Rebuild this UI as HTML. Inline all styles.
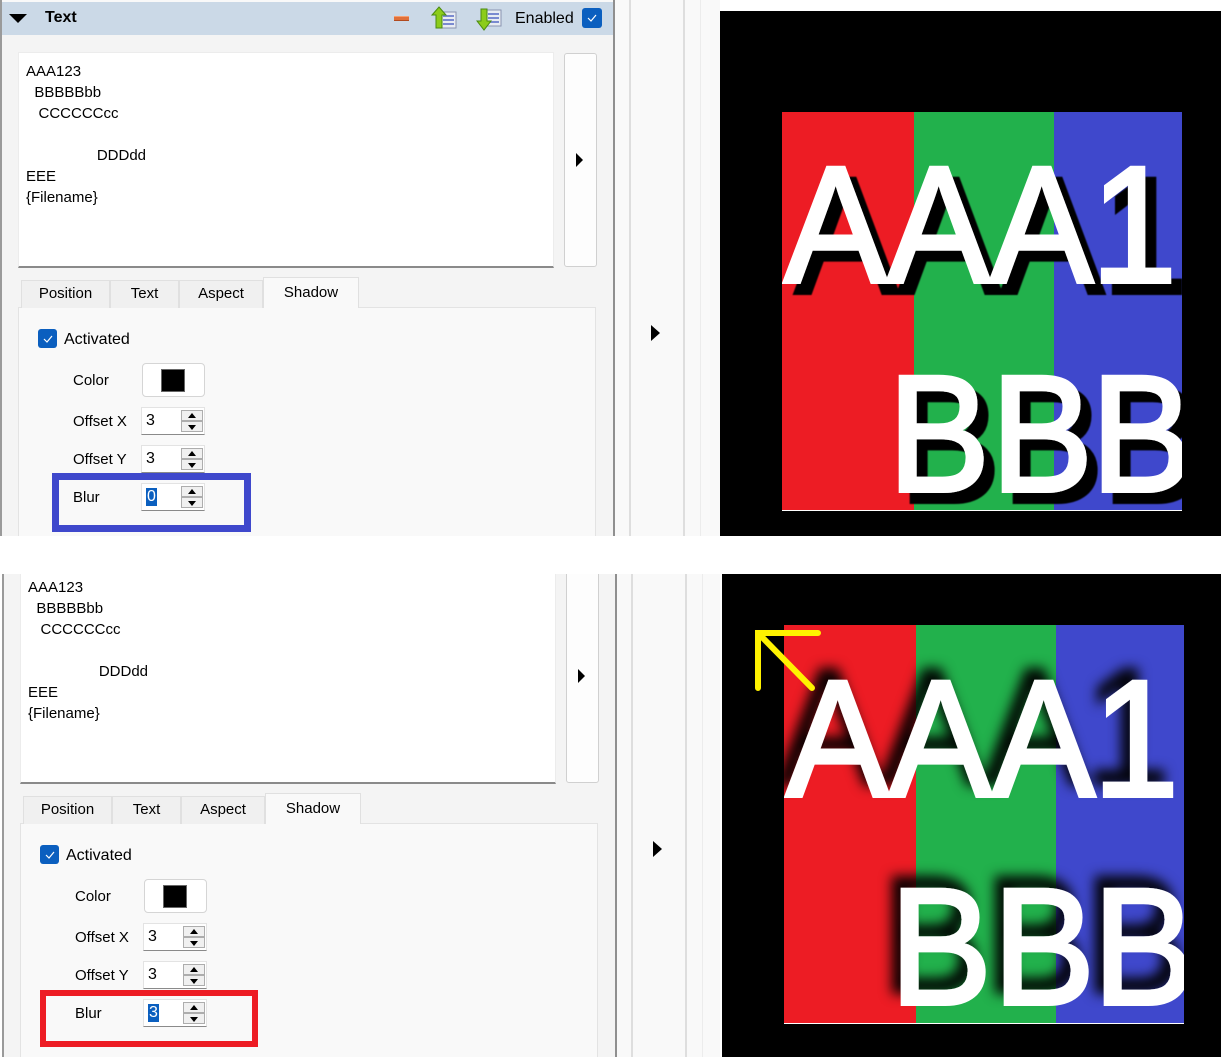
<!DOCTYPE html>
<html><head><meta charset="utf-8"><style>
*{margin:0;padding:0;box-sizing:border-box}
body{width:1221px;height:1057px;background:#fff;position:relative;overflow:hidden;font-family:"Liberation Sans",sans-serif;font-size:15px;color:#000}
.a{position:absolute}
.panel{position:absolute;left:0;top:0;width:720px;height:536px;background:#f9f9f9;overflow:hidden}
.lab{position:absolute;line-height:18px}
.spin{position:absolute;width:64px;height:28px;background:#fff;border:1px solid #e3e3e3;border-bottom:1px solid #8a8a8a}
.spin .v{position:absolute;left:4px;top:4px;line-height:18px;font-size:16px}
.spin .b{position:absolute;left:39px;width:22px;height:11px;background:#f0f0f0;border:1px solid #adadad}
.tri-u{position:absolute;left:6px;top:2px;width:0;height:0;border-left:4px solid transparent;border-right:4px solid transparent;border-bottom:5px solid #000}
.tri-d{position:absolute;left:6px;top:3px;width:0;height:0;border-left:4px solid transparent;border-right:4px solid transparent;border-top:5px solid #000}
.tab{position:absolute;top:280px;height:28px;background:#f0f0f0;border:1px solid #e0e0e0;border-bottom:none;line-height:26px;text-align:center}
.chk{position:absolute;background:#0b5fbf;border-radius:3px}
</style></head><body>

<div class="panel">
  <div class="a" style="left:0;top:0;width:2px;height:536px;background:#9a9a9a"></div>
  <div class="a" style="left:2px;top:2px;width:612px;height:534px;background:#f4f4f4"></div>
  <div class="a" style="left:613px;top:0;width:2px;height:536px;background:#8f8f8f"></div>
  <div class="a" style="left:629px;top:0;width:2px;height:536px;background:#dedede"></div>
  <div class="a" style="left:683px;top:0;width:2px;height:536px;background:#dedede"></div>
  <div class="a" style="left:700px;top:0;width:1px;height:536px;background:#ececec"></div>
  <div class="a" style="left:651px;top:325px;width:0;height:0;border-top:8px solid transparent;border-bottom:8px solid transparent;border-left:9px solid #000"></div>
  <div class="a" style="left:2px;top:2px;width:611px;height:33px;background:#cbd9e7"></div>
  <div class="a" style="left:9px;top:14px;width:0;height:0;border-left:9px solid transparent;border-right:9px solid transparent;border-top:9px solid #000"></div>
  <div class="lab" style="left:45px;top:9px;font-weight:bold;font-size:16px">Text</div>
  <div class="a" style="left:394px;top:16px;width:15px;height:5px;background:#e0703a;border-top:1px solid #f7a070;border-bottom:1px solid #b04a20"></div>
  <svg class="a" style="left:431px;top:6px" width="26" height="24" viewBox="0 0 26 24">
    <rect x="10" y="6" width="15" height="16" fill="#e8ecf2" stroke="#8a94b0"/>
    <rect x="12" y="9" width="11" height="2" fill="#7a8ad0"/><rect x="12" y="13" width="11" height="2" fill="#7a8ad0"/><rect x="12" y="17" width="11" height="2" fill="#7a8ad0"/>
    <path d="M8 1 L15 9 H11 V22 H5 V9 H1 Z" fill="#8ccc1a" stroke="#4a8a10"/>
  </svg>
  <svg class="a" style="left:476px;top:8px" width="26" height="24" viewBox="0 0 26 24">
    <rect x="10" y="2" width="15" height="16" fill="#e8ecf2" stroke="#8a94b0"/>
    <rect x="12" y="5" width="11" height="2" fill="#7a8ad0"/><rect x="12" y="9" width="11" height="2" fill="#7a8ad0"/><rect x="12" y="13" width="11" height="2" fill="#7a8ad0"/>
    <path d="M5 1 H11 V13 H15 L8 22 L1 13 H5 Z" fill="#8ccc1a" stroke="#4a8a10"/>
  </svg>
  <div class="lab" style="left:515px;top:10px;font-size:16px">Enabled</div>
  <div class="chk" style="left:582px;top:8px;width:20px;height:20px"></div>
  <svg class="a" style="left:586px;top:13px" width="12" height="10"><path d="M2 5 L5 8 L10 2" stroke="#fff" stroke-width="1.2" fill="none"/></svg>
  <div class="a" style="left:18px;top:52px;width:536px;height:216px;background:#fff;border:1px solid #ececec;border-bottom:2px solid #8a8a8a"></div>
  <div class="a" style="left:26px;top:61px;line-height:21px;font-size:15px;white-space:pre">AAA123
  BBBBBbb
   CCCCCCcc

                 DDDdd
EEE
{Filename}</div>
  <div class="a" style="left:564px;top:53px;width:33px;height:214px;background:#fdfdfd;border:1px solid #d0d0d0;border-radius:3px"></div>
  <div class="a" style="left:576px;top:153px;width:0;height:0;border-top:7px solid transparent;border-bottom:7px solid transparent;border-left:7px solid #000"></div>
  <div class="a" style="left:18px;top:307px;width:578px;height:240px;background:#f9f9f9;border:1px solid #e3e3e3"></div>
  <div class="tab" style="left:21px;width:89px">Position</div>
  <div class="tab" style="left:110px;width:69px">Text</div>
  <div class="tab" style="left:179px;width:84px">Aspect</div>
  <div class="tab" style="left:263px;top:277px;width:96px;height:31px;background:#f9f9f9;line-height:30px">Shadow</div>
  <div class="chk" style="left:38px;top:329px;width:19px;height:19px"></div>
  <svg class="a" style="left:42px;top:334px" width="12" height="10"><path d="M2 5 L5 8 L10 2" stroke="#fff" stroke-width="1.2" fill="none"/></svg>
  <div class="lab" style="left:64px;top:331px;font-size:16px">Activated</div>
  <div class="lab" style="left:73px;top:372px">Color</div>
  <div class="a" style="left:142px;top:363px;width:63px;height:34px;background:#fff;border:1px solid #d5d5d5;border-radius:4px"></div>
  <div class="a" style="left:161px;top:369px;width:24px;height:23px;background:#000;border:1px solid #666"></div>
  <div class="lab" style="left:73px;top:413px">Offset X</div>
  <div class="spin" style="left:141px;top:407px"><span class="v">3</span><div class="b" style="top:2px"><div class="tri-u"></div></div><div class="b" style="top:13px"><div class="tri-d"></div></div></div>
  <div class="lab" style="left:73px;top:451px">Offset Y</div>
  <div class="spin" style="left:141px;top:445px"><span class="v">3</span><div class="b" style="top:2px"><div class="tri-u"></div></div><div class="b" style="top:13px"><div class="tri-d"></div></div></div>
  <div class="lab" style="left:73px;top:489px">Blur</div>
  <div class="spin" style="left:141px;top:483px"><span class="v" style="background:#0b5fbf;color:#fff;padding:0 1px">0</span><div class="b" style="top:2px"><div class="tri-u"></div></div><div class="b" style="top:13px"><div class="tri-d"></div></div></div>
  <div class="a" style="left:52px;top:473px;width:199px;height:59px;border:7px solid #3f48cc"></div>
</div>

<div class="a" style="left:2px;top:574px;width:718px;height:483px;overflow:hidden">
 <div class="panel" style="top:-58px;height:541px">
  <div class="a" style="left:0;top:0;width:2px;height:541px;background:#9a9a9a"></div>
  <div class="a" style="left:2px;top:2px;width:612px;height:539px;background:#f4f4f4"></div>
  <div class="a" style="left:613px;top:0;width:2px;height:541px;background:#8f8f8f"></div>
  <div class="a" style="left:629px;top:0;width:2px;height:541px;background:#dedede"></div>
  <div class="a" style="left:683px;top:0;width:2px;height:541px;background:#dedede"></div>
  <div class="a" style="left:700px;top:0;width:1px;height:541px;background:#ececec"></div>
  <div class="a" style="left:651px;top:325px;width:0;height:0;border-top:8px solid transparent;border-bottom:8px solid transparent;border-left:9px solid #000"></div>
  <div class="a" style="left:18px;top:52px;width:536px;height:216px;background:#fff;border:1px solid #ececec;border-bottom:2px solid #8a8a8a"></div>
  <div class="a" style="left:26px;top:61px;line-height:21px;font-size:15px;white-space:pre">AAA123
  BBBBBbb
   CCCCCCcc

                 DDDdd
EEE
{Filename}</div>
  <div class="a" style="left:564px;top:53px;width:33px;height:214px;background:#fdfdfd;border:1px solid #d0d0d0;border-radius:3px"></div>
  <div class="a" style="left:576px;top:153px;width:0;height:0;border-top:7px solid transparent;border-bottom:7px solid transparent;border-left:7px solid #000"></div>
  <div class="a" style="left:18px;top:307px;width:578px;height:240px;background:#f9f9f9;border:1px solid #e3e3e3"></div>
  <div class="tab" style="left:21px;width:89px">Position</div>
  <div class="tab" style="left:110px;width:69px">Text</div>
  <div class="tab" style="left:179px;width:84px">Aspect</div>
  <div class="tab" style="left:263px;top:277px;width:96px;height:31px;background:#f9f9f9;line-height:30px">Shadow</div>
  <div class="chk" style="left:38px;top:329px;width:19px;height:19px"></div>
  <svg class="a" style="left:42px;top:334px" width="12" height="10"><path d="M2 5 L5 8 L10 2" stroke="#fff" stroke-width="1.2" fill="none"/></svg>
  <div class="lab" style="left:64px;top:331px;font-size:16px">Activated</div>
  <div class="lab" style="left:73px;top:372px">Color</div>
  <div class="a" style="left:142px;top:363px;width:63px;height:34px;background:#fff;border:1px solid #d5d5d5;border-radius:4px"></div>
  <div class="a" style="left:161px;top:369px;width:24px;height:23px;background:#000;border:1px solid #666"></div>
  <div class="lab" style="left:73px;top:413px">Offset X</div>
  <div class="spin" style="left:141px;top:407px"><span class="v">3</span><div class="b" style="top:2px"><div class="tri-u"></div></div><div class="b" style="top:13px"><div class="tri-d"></div></div></div>
  <div class="lab" style="left:73px;top:451px">Offset Y</div>
  <div class="spin" style="left:141px;top:445px"><span class="v">3</span><div class="b" style="top:2px"><div class="tri-u"></div></div><div class="b" style="top:13px"><div class="tri-d"></div></div></div>
  <div class="lab" style="left:73px;top:489px">Blur</div>
  <div class="spin" style="left:141px;top:483px"><span class="v" style="background:#0b5fbf;color:#fff;padding:0 1px">3</span><div class="b" style="top:2px"><div class="tri-u"></div></div><div class="b" style="top:13px"><div class="tri-d"></div></div></div>
  <div class="a" style="left:38px;top:474px;width:218px;height:57px;border:6px solid #ed1c24"></div>
 </div>
</div>

<svg class="a" style="left:720px;top:11px" width="501" height="525" viewBox="720 11 501 525">
  <defs>
    <clipPath id="c1"><rect x="782" y="112" width="400" height="399"/></clipPath>
    <filter id="f1" x="-20%" y="-20%" width="140%" height="140%"><feDropShadow dx="11" dy="11" stdDeviation="0.6" flood-color="#000"/></filter>
  </defs>
  <rect x="720" y="11" width="501" height="525" fill="#000"/>
  <rect x="782" y="112" width="132" height="399" fill="#ed1c24"/>
  <rect x="914" y="112" width="140" height="399" fill="#22b14c"/>
  <rect x="1054" y="112" width="128" height="399" fill="#3f48cc"/>
  <rect x="782" y="510" width="400" height="1" fill="#fff"/>
  <g clip-path="url(#c1)" fill="#fff" stroke="#fff" stroke-width="4" stroke-linejoin="miter" font-family="Liberation Sans" font-size="166" filter="url(#f1)">
    <text x="0" y="282" transform="translate(784 0) scale(0.93 1)">A</text>
    <text x="0" y="282" transform="translate(887 0) scale(0.93 1)">A</text>
    <text x="0" y="282" transform="translate(990 0) scale(0.93 1)">A</text>
    <text x="0" y="282" transform="translate(1091 0) scale(0.93 1)">1</text>
    <text x="0" y="491" transform="translate(888 0) scale(0.92 1)">B</text>
    <text x="0" y="491" transform="translate(991 0) scale(0.92 1)">B</text>
    <text x="0" y="491" transform="translate(1091 0) scale(0.92 1)">B</text>
  </g>
</svg>

<svg class="a" style="left:722px;top:574px" width="499" height="483" viewBox="722 574 499 483">
  <defs>
    <clipPath id="c2"><rect x="784" y="625" width="400" height="399"/></clipPath>
    <filter id="f2" x="-30%" y="-30%" width="160%" height="160%"><feDropShadow dx="-9" dy="-12" stdDeviation="6" flood-color="#000" flood-opacity="0.95"/></filter>
  </defs>
  <rect x="722" y="574" width="499" height="483" fill="#000"/>
  <rect x="784" y="625" width="132" height="399" fill="#ed1c24"/>
  <rect x="916" y="625" width="140" height="399" fill="#22b14c"/>
  <rect x="1056" y="625" width="128" height="399" fill="#3f48cc"/>
  <rect x="784" y="1023" width="400" height="1" fill="#fff"/>
  <g clip-path="url(#c2)" fill="#fff" stroke="#fff" stroke-width="4" font-family="Liberation Sans" font-size="166" filter="url(#f2)">
    <text x="0" y="796" transform="translate(786 0) scale(0.93 1)">A</text>
    <text x="0" y="796" transform="translate(889 0) scale(0.93 1)">A</text>
    <text x="0" y="796" transform="translate(992 0) scale(0.93 1)">A</text>
    <text x="0" y="796" transform="translate(1093 0) scale(0.93 1)">1</text>
    <text x="0" y="1004" transform="translate(890 0) scale(0.92 1)">B</text>
    <text x="0" y="1004" transform="translate(993 0) scale(0.92 1)">B</text>
    <text x="0" y="1004" transform="translate(1093 0) scale(0.92 1)">B</text>
  </g>
  <path d="M818 633 H758 V688 M758 633 L812 688" stroke="#fff200" stroke-width="6" stroke-linecap="round" fill="none"/>
</svg>
</body></html>
